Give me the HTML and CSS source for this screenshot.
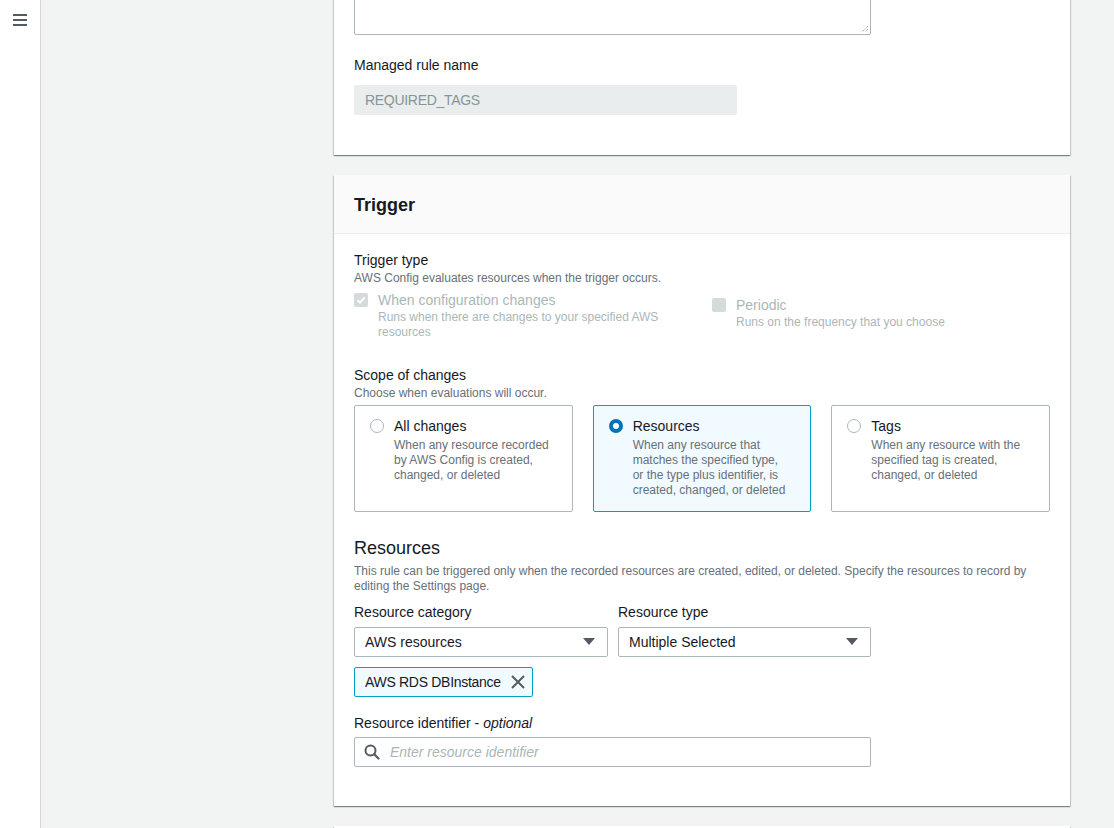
FILE: index.html
```html
<!DOCTYPE html>
<html>
<head>
<meta charset="utf-8">
<link rel="stylesheet" href="styles.css">
</head>
<body>
<div class="app">
  <aside class="sidebar">
    <svg class="burger" width="14" height="12" viewBox="0 0 14 12"><rect x="0" y="0" width="14" height="2" fill="#545b64"/><rect x="0" y="5" width="14" height="2" fill="#545b64"/><rect x="0" y="10" width="14" height="2" fill="#545b64"/></svg>
  </aside>
  <main class="main">
    <div class="column">
      <section class="card card-top">
        <div class="card-body top-body">
          <div class="textarea"><svg class="grip" width="8" height="8" viewBox="0 0 8 8"><path d="M7 1 L1 7 M7 4 L4 7" stroke="#879596" stroke-width="1" stroke-dasharray="1 1"/></svg></div>
          <div class="field">
            <div class="label">Managed rule name</div>
            <div class="input disabled">REQUIRED_TAGS</div>
          </div>
        </div>
      </section>

      <section class="card">
        <header class="card-header">Trigger</header>
        <div class="card-body">
          <div class="label">Trigger type</div>
          <div class="desc d1">AWS Config evaluates resources when the trigger occurs.</div>
          <div class="checks">
            <div class="check">
              <span class="box checked"><svg width="14" height="14" viewBox="0 0 14 14"><path d="M3.5 7.2 L6 9.6 L10.6 4.4" fill="none" stroke="#fff" stroke-width="2"/></svg></span>
              <div>
                <div class="check-title">When configuration changes</div>
                <div class="check-desc">Runs when there are changes to your specified AWS resources</div>
              </div>
            </div>
            <div class="check periodic">
              <span class="box"></span>
              <div>
                <div class="check-title">Periodic</div>
                <div class="check-desc">Runs on the frequency that you choose</div>
              </div>
            </div>
          </div>

          <div class="label scope">Scope of changes</div>
          <div class="desc d1">Choose when evaluations will occur.</div>
          <div class="tiles">
            <div class="tile">
              <span class="radio"></span>
              <div>
                <div class="tile-title">All changes</div>
                <div class="tile-desc">When any resource recorded by AWS Config is created, changed, or deleted</div>
              </div>
            </div>
            <div class="tile selected">
              <span class="radio on"></span>
              <div>
                <div class="tile-title">Resources</div>
                <div class="tile-desc">When any resource that matches the specified type, or the type plus identifier, is created, changed, or deleted</div>
              </div>
            </div>
            <div class="tile">
              <span class="radio"></span>
              <div>
                <div class="tile-title">Tags</div>
                <div class="tile-desc">When any resource with the specified tag is created, changed, or deleted</div>
              </div>
            </div>
          </div>

          <h3 class="sub">Resources</h3>
          <div class="desc">This rule can be triggered only when the recorded resources are created, edited, or deleted. Specify the resources to record by editing the Settings page.</div>

          <div class="selects">
            <div class="field-col">
              <div class="label">Resource category</div>
              <div class="select">AWS resources<svg class="caret" width="12" height="8" viewBox="0 0 12 8"><path d="M0 0 H12 L6 7 Z" fill="#545b64"/></svg></div>
            </div>
            <div class="field-col">
              <div class="label">Resource type</div>
              <div class="select">Multiple Selected<svg class="caret" width="12" height="8" viewBox="0 0 12 8"><path d="M0 0 H12 L6 7 Z" fill="#545b64"/></svg></div>
            </div>
          </div>
          <div class="token">AWS RDS DBInstance<svg class="x" width="14" height="14" viewBox="0 0 14 14"><path d="M1 1 L13 13 M13 1 L1 13" stroke="#545b64" stroke-width="2"/></svg></div>

          <div class="label ident">Resource identifier - <i>optional</i></div>
          <div class="search"><svg class="mag" width="16" height="16" viewBox="0 0 16 16"><circle cx="6.5" cy="6.5" r="5" fill="none" stroke="#545b64" stroke-width="2"/><path d="M10.2 10.2 L14.5 14.5" stroke="#545b64" stroke-width="2.2" stroke-linecap="round"/></svg><span class="ph">Enter resource identifier</span></div>
        </div>
      </section>

      <section class="card card-next"></section>
    </div>
  </main>
</div>
</body>
</html>
```
FILE: styles.css
```css
* { box-sizing: border-box; }
html, body { margin: 0; padding: 0; height: 100%; overflow: hidden; }
body {
  font-family: "Liberation Sans", Arial, sans-serif;
  color: #16191f;
  background: #f2f3f3;
  font-size: 14px;
}
.app { display: flex; height: 828px; }
.sidebar {
  width: 41px;
  flex: none;
  background: #fff;
  border-right: 1px solid #d5d8d8;
  padding: 14px 0 0 13px;
}
.burger { display: block; }
.main { flex: 1; padding: 0 44px 0 293px; }
.column { margin-top: -60px; display: flex; flex-direction: column; gap: 20px; }
.card {
  background: #fff;
  box-shadow: 0 1px 1px 0 rgba(0,28,36,.3), 1px 1px 1px 0 rgba(0,28,36,.15), -1px 1px 1px 0 rgba(0,28,36,.15);
}
.card-body { padding: 16px 20px 39px; }
.top-body { padding: 20px 20px 40px; }
.textarea {
  width: 517px;
  height: 75px;
  border: 1px solid #aab7b8;
  border-radius: 2px;
  position: relative;
}
.grip { position: absolute; right: 1px; bottom: 1px; }
.field { margin-top: 20px; }
.label { line-height: 20px; font-size: 14px; color: #16191f; }
.input {
  margin-top: 10px;
  width: 383px;
  height: 30px;
  line-height: 30px;
  padding: 0 11px;
  border-radius: 2px;
  letter-spacing: -0.3px;
}
.input.disabled { background: #eaeded; color: #879596; }
.card-header {
  background: #fafafa;
  border-bottom: 1px solid #eaeded;
  height: 59px;
  padding: 2px 20px 0;
  line-height: 56px;
  font-weight: bold;
  font-size: 18px;
}
.desc { font-size: 12px; line-height: 15px; color: #687078; }
.d1 { margin-top: 1px; }
.checks {
  display: grid;
  grid-template-columns: 1fr 1fr;
  gap: 20px;
  margin-top: 4px;
}
.check { display: flex; gap: 10px; }
.periodic { margin-top: 5px; }
.box {
  flex: none;
  width: 14px;
  height: 14px;
  margin-top: 3px;
  border-radius: 2px;
  background: #d5dbdb;
  display: block;
}
.box svg { display: block; }
.check-title { line-height: 20px; color: #aab7b8; font-size: 14px; }
.check-desc { font-size: 12px; line-height: 15px; color: #aab7b8; padding-right: 20px; }
.scope { margin-top: 25px; }
.tiles {
  display: grid;
  grid-template-columns: repeat(3, 1fr);
  gap: 20px;
  margin-top: 4px;
}
.tile {
  border: 1px solid #aab7b8;
  border-radius: 2px;
  padding: 10px 15px 13px;
  display: flex;
  gap: 10px;
}
.tile.selected { border-color: #00a1c9; background: #f1faff; }
.radio {
  flex: none;
  width: 14px;
  height: 14px;
  margin-top: 3px;
  border-radius: 50%;
  border: 1px solid #aab7b8;
  background: #fff;
}
.radio.on { border: 4px solid #0073bb; }
.tile-title { line-height: 20px; font-size: 14px; }
.tile-desc { font-size: 12px; line-height: 15px; color: #687078; margin-top: 2px; padding-right: 4px; }
.sub { margin: 24px 0 4px; font-size: 18px; font-weight: normal; line-height: 24px; }
.selects {
  display: grid;
  grid-template-columns: 254px 253px;
  gap: 10px;
  margin-top: 8px;
}
.select {
  margin-top: 5px;
  height: 30px;
  border: 1px solid #aab7b8;
  border-radius: 2px;
  padding: 0 12px 0 10px;
  display: flex;
  align-items: center;
  justify-content: space-between;
  font-size: 14px;
}
.caret { display: block; }
.token {
  margin-top: 10px;
  display: inline-flex;
  align-items: center;
  gap: 10px;
  height: 30px;
  padding: 0 7px 0 10px;
  border: 1px solid #00a1c9;
  border-radius: 2px;
  background: #f1faff;
  font-size: 14px;
  letter-spacing: -0.3px;
}
.ident { margin-top: 16px; }
.search {
  margin-top: 4px;
  width: 517px;
  height: 30px;
  border: 1px solid #aab7b8;
  border-radius: 2px;
  display: flex;
  align-items: center;
  gap: 10px;
  padding-left: 9px;
}
.mag { display: block; }
.ph { font-style: italic; color: #aab7b8; font-size: 14px; }
.card-next { height: 40px; }
```
